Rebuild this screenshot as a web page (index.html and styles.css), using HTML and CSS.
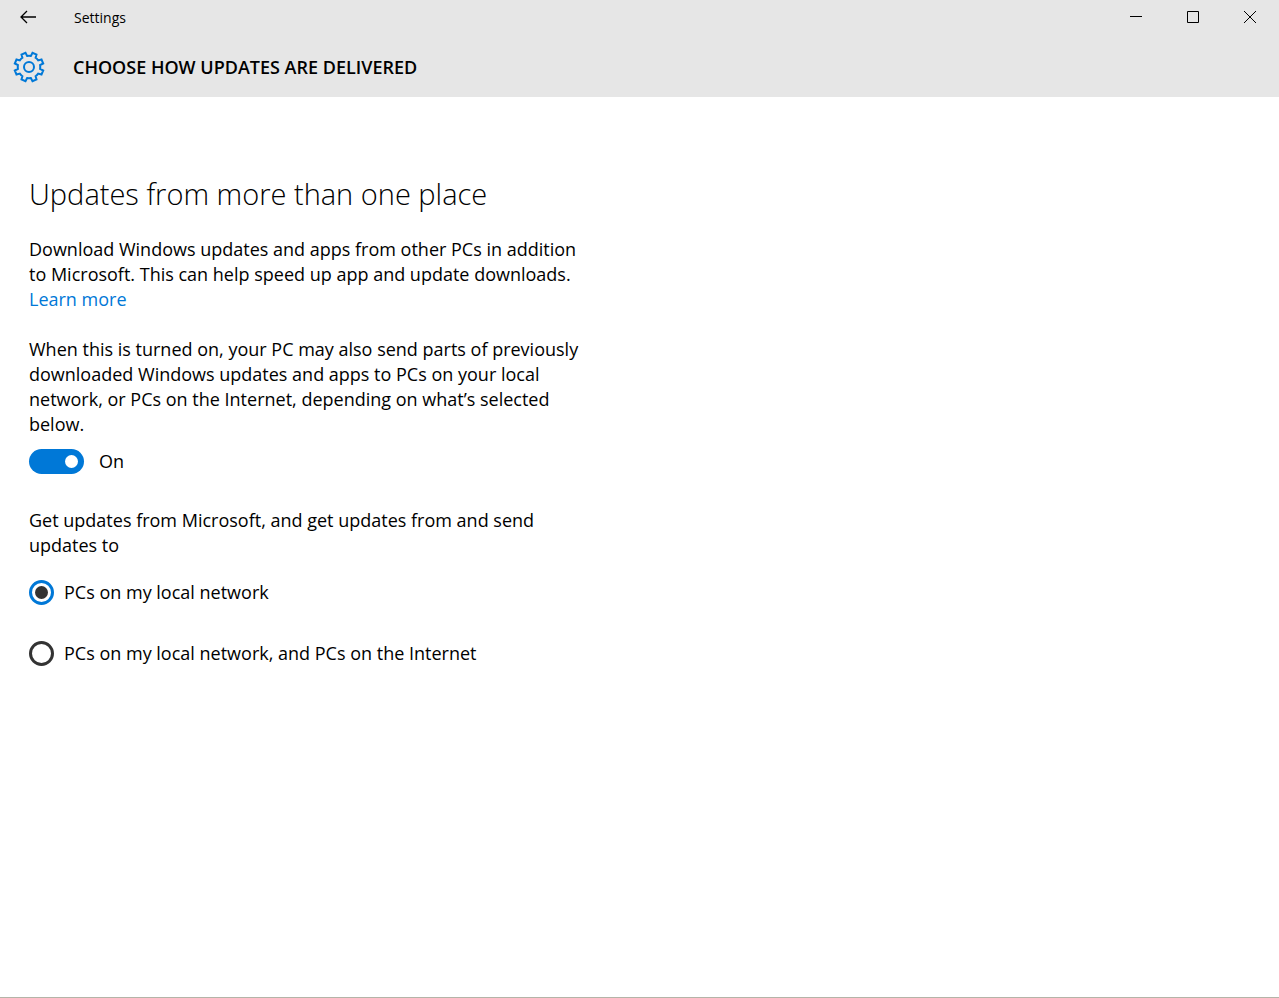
FILE: index.html
```html
<!DOCTYPE html>
<html lang="en">
<head>
<meta charset="utf-8">
<title>Settings</title>
<link rel="stylesheet" href="styles.css">
</head>
<body>
<div class="window">
  <header class="header">
    <div class="titlebar">
      <button class="back" type="button" aria-label="Back"><svg width="16" height="14" viewBox="0 0 16 14"><path d="M7 1L1 7l6 6M1 7h15"/></svg></button>
      <span class="app-name">Settings</span>
      <div class="controls">
        <button type="button" aria-label="Minimize"><svg width="14" height="14" viewBox="0 0 14 14"><path d="M1 6.500h12"/></svg></button>
        <button type="button" aria-label="Maximize"><svg width="14" height="14" viewBox="0 0 14 14"><path d="M1.500 1.500h11v11h-11z"/></svg></button>
        <button type="button" aria-label="Close"><svg width="14" height="14" viewBox="0 0 14 14"><path d="M1 1l12 12M13 1L1 13"/></svg></button>
      </div>
    </div>
    <div class="page-title">
      <svg class="gear" width="32" height="32" viewBox="-16 -16 32 32"><path d="M11.100 1.900L14.200 3.500L12.500 7.500L9.200 6.600Q8.100 8.100 6.600 9.200L7.500 12.500L3.500 14.200L1.900 11.100Q0 11.400-1.900 11.100L-3.500 14.200L-7.500 12.500L-6.600 9.200Q-8.100 8.100-9.200 6.600L-12.500 7.500L-14.200 3.500L-11.100 1.900Q-11.400 0-11.100-1.900L-14.200-3.500L-12.500-7.500L-9.200-6.600Q-8.100-8.100-6.600-9.200L-7.500-12.500L-3.500-14.200L-1.900-11.100Q0-11.400 1.900-11.100L3.500-14.200L7.500-12.500L6.600-9.200Q8.100-8.100 9.200-6.600L12.500-7.500L14.200-3.500L11.100-1.900Q11.400 0 11.100 1.900z"/><circle r="5"/></svg>
      <h1>CHOOSE HOW UPDATES ARE DELIVERED</h1>
    </div>
  </header>
  <main class="content">
    <h2>Updates from more than one place</h2>
    <p>Download Windows updates and apps from other PCs in addition<br>to Microsoft. This can help speed up app and update downloads.<br><a href="#">Learn more</a></p>
    <p>When this is turned on, your PC may also send parts of previously<br>downloaded Windows updates and apps to PCs on your local<br>network, or PCs on the Internet, depending on what’s selected<br>below.</p>
    <label class="switch"><input type="checkbox" role="switch" checked><span>On</span></label>
    <fieldset>
      <legend>Get updates from Microsoft, and get updates from and send<br>updates to</legend>
      <label class="option"><input type="radio" name="source" checked><span>PCs on my local network</span></label>
      <label class="option"><input type="radio" name="source"><span>PCs on my local network, and PCs on the Internet</span></label>
    </fieldset>
  </main>
</div>
</body>
</html>
```
FILE: styles.css
```css
* { box-sizing: border-box; }
body { margin: 0; background: #fff; color: #000; font: 18px/25px "Open Sans", "Noto Sans", sans-serif; }
.window { min-height: 100vh; border-bottom: 1px solid #b4b4a8; }
.header { background: #e6e6e6; padding-bottom: 11px; }
.titlebar { display: flex; align-items: center; height: 35px; }
button { border: 0; padding: 0; background: none; display: grid; place-items: center; height: 35px; }
svg { fill: none; stroke: #000; stroke-width: 1; }
.back { width: 56px; padding-bottom: 2px; }
.back svg { stroke-width: 1.3; }
.app-name { margin-left: 18px; font-size: 14px; }
.controls { display: flex; margin-left: auto; padding-right: 1px; }
.controls button { width: 57px; padding-bottom: 1px; }
.page-title { display: flex; align-items: center; height: 51px; padding: 13px 13px 0; gap: 28px; }
.gear { stroke: #0078d7; stroke-width: 2; }
h1 { margin: 0; font-size: 18px; font-weight: 600; line-height: 25px; }
.content { padding: 77px 29px 29px; }
h2 { margin: 0 0 23px; font-size: 29px; font-weight: 300; line-height: 40px; }
p { margin: 0 0 25px; }
a { color: #0078d7; text-decoration: none; }
.switch { display: flex; align-items: center; gap: 15px; margin-top: -13px; }
.switch input { appearance: none; margin: 0; width: 55px; height: 25px; border-radius: 13px; background: #0078d7; display: flex; align-items: center; justify-content: flex-end; padding: 0 6px; }
.switch input::after { content: ""; width: 13px; height: 13px; border-radius: 50%; background: #fff; }
fieldset { border: 0; margin: 34px 0 0; padding: 0; }
legend { padding: 0; margin-bottom: 22px; }
.option { display: flex; align-items: center; gap: 10px; margin-bottom: 36px; }
.option input { appearance: none; margin: 0; width: 25px; height: 25px; border: 3px solid #333; border-radius: 50%; display: grid; place-items: center; }
.option input:checked { border-color: #0078d7; }
.option input:checked::after { content: ""; width: 13px; height: 13px; border-radius: 50%; background: #333; }
```
